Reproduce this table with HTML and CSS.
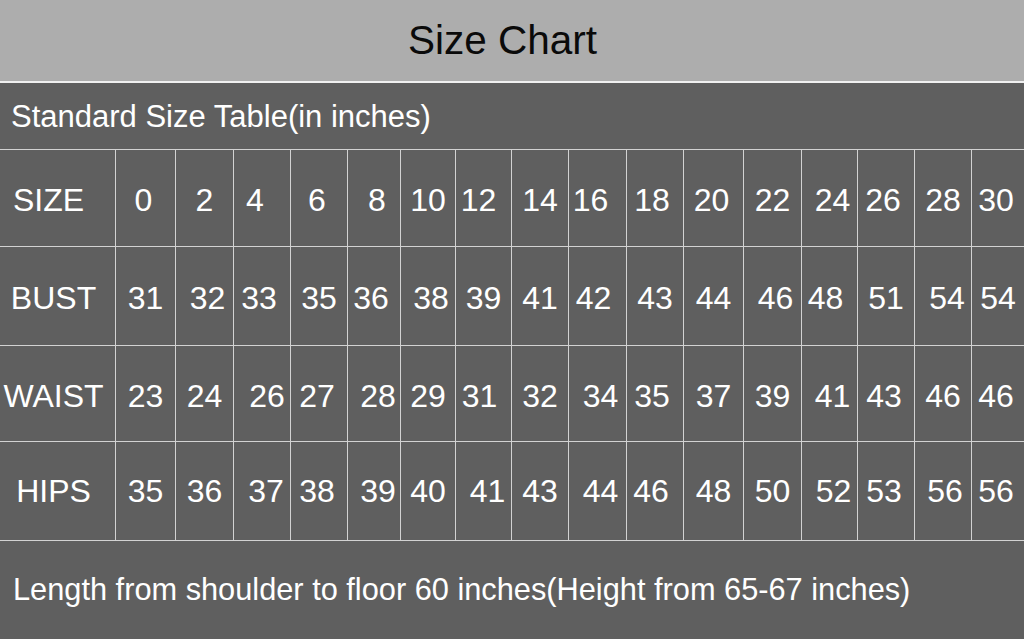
FILE: index.html
```html
<!DOCTYPE html>
<html lang="en">
<head>
<meta charset="utf-8">
<title>Size Chart</title>
<link rel="stylesheet" href="styles.css">
</head>
<body>
<div class="page">
  <header class="title-bar"><h1 class="title">Size Chart</h1></header>
  <div class="subtitle">Standard Size Table(in inches)</div>
  <div class="chart">
    <div class="label label-size">SIZE</div>
    <div class="cell m2">0</div><div class="cell">2</div><div class="cell m7">4</div><div class="cell m2">6</div><div class="cell p3">8</div><div class="cell">10</div><div class="cell m5">12</div><div class="cell">14</div><div class="cell m7">16</div><div class="cell m3">18</div><div class="cell m2">20</div><div class="cell">22</div><div class="cell p3">24</div><div class="cell m3">26</div><div class="cell">28</div><div class="cell m2">30</div>
    <div class="label">BUST</div>
    <div class="cell">31</div><div class="cell p3">32</div><div class="cell m3">33</div><div class="cell">35</div><div class="cell m3">36</div><div class="cell p3">38</div><div class="cell">39</div><div class="cell">41</div><div class="cell m4">42</div><div class="cell">43</div><div class="cell">44</div><div class="cell p3">46</div><div class="cell m4">48</div><div class="cell">51</div><div class="cell p4">54</div><div class="cell">54</div>
    <div class="label">WAIST</div>
    <div class="cell">23</div><div class="cell">24</div><div class="cell p5">26</div><div class="cell m2">27</div><div class="cell p4">28</div><div class="cell">29</div><div class="cell m4">31</div><div class="cell">32</div><div class="cell p3">34</div><div class="cell m3">35</div><div class="cell">37</div><div class="cell">39</div><div class="cell p3">41</div><div class="cell m2">43</div><div class="cell">46</div><div class="cell m2">46</div>
    <div class="label">HIPS</div>
    <div class="cell">35</div><div class="cell">36</div><div class="cell p4">37</div><div class="cell m2">38</div><div class="cell p4">39</div><div class="cell">40</div><div class="cell p4">41</div><div class="cell">43</div><div class="cell p3">44</div><div class="cell m4">46</div><div class="cell">48</div><div class="cell">50</div><div class="cell p4">52</div><div class="cell m2">53</div><div class="cell p2">56</div><div class="cell m2">56</div>
  </div>
  <div class="footer">Length from shoulder to floor 60 inches(Height from 65-67 inches)</div>
</div>
</body>
</html>
```

FILE: styles.css
```css
html, body {
  margin: 0;
  padding: 0;
}
body {
  background: #5f5f5f;
  font-family: "Liberation Sans", Arial, sans-serif;
  color: #ffffff;
  width: 1024px;
  height: 639px;
  overflow: hidden;
}
.page {
  display: flex;
  flex-direction: column;
  height: 639px;
}
.title-bar {
  height: 81px;
  background: #adadad;
  border-bottom: 2px solid #f0f0f0;
  display: flex;
  align-items: center;
  justify-content: center;
  padding-right: 19px;
  box-sizing: content-box;
}
.title {
  margin: 0;
  font-size: 40.5px;
  font-weight: normal;
  color: #0a0a0a;
}
.subtitle {
  height: 66px;
  display: flex;
  align-items: center;
  padding-left: 11px;
  font-size: 31px;
  padding-top: 2px;
  box-sizing: border-box;
}
.chart {
  display: grid;
  grid-template-columns: 115px 59px 57px 56px 56px 52px 54px 55px 56px 57px 56px 59px 57px 55px 56px 56px 52px;
  grid-template-rows: 96px 98px 95px 98px;
  gap: 1px;
  padding: 1px 0;
  background: #d2d2d2;
}
.label, .cell {
  background: #5f5f5f;
  display: flex;
  align-items: center;
  justify-content: center;
  font-size: 32px;
  padding-top: 5px;
  box-sizing: border-box;
}
.chart > :nth-child(n+52) {
  padding-top: 0;
}
.label {
  padding-right: 8px;
}
.label.label-size {
  padding-right: 18px;
}
/* small horizontal nudges of the figures within their cells */
.m2 { padding-right: 4px; }
.m3 { padding-right: 6px; }
.m4 { padding-right: 8px; }
.m5 { padding-right: 10px; }
.m7 { padding-right: 14px; }
.p2 { padding-left: 4px; }
.p3 { padding-left: 6px; }
.p4 { padding-left: 8px; }
.p5 { padding-left: 10px; }
.footer {
  flex: 1;
  display: flex;
  align-items: center;
  padding-left: 13px;
  font-size: 30.75px;
}
```
